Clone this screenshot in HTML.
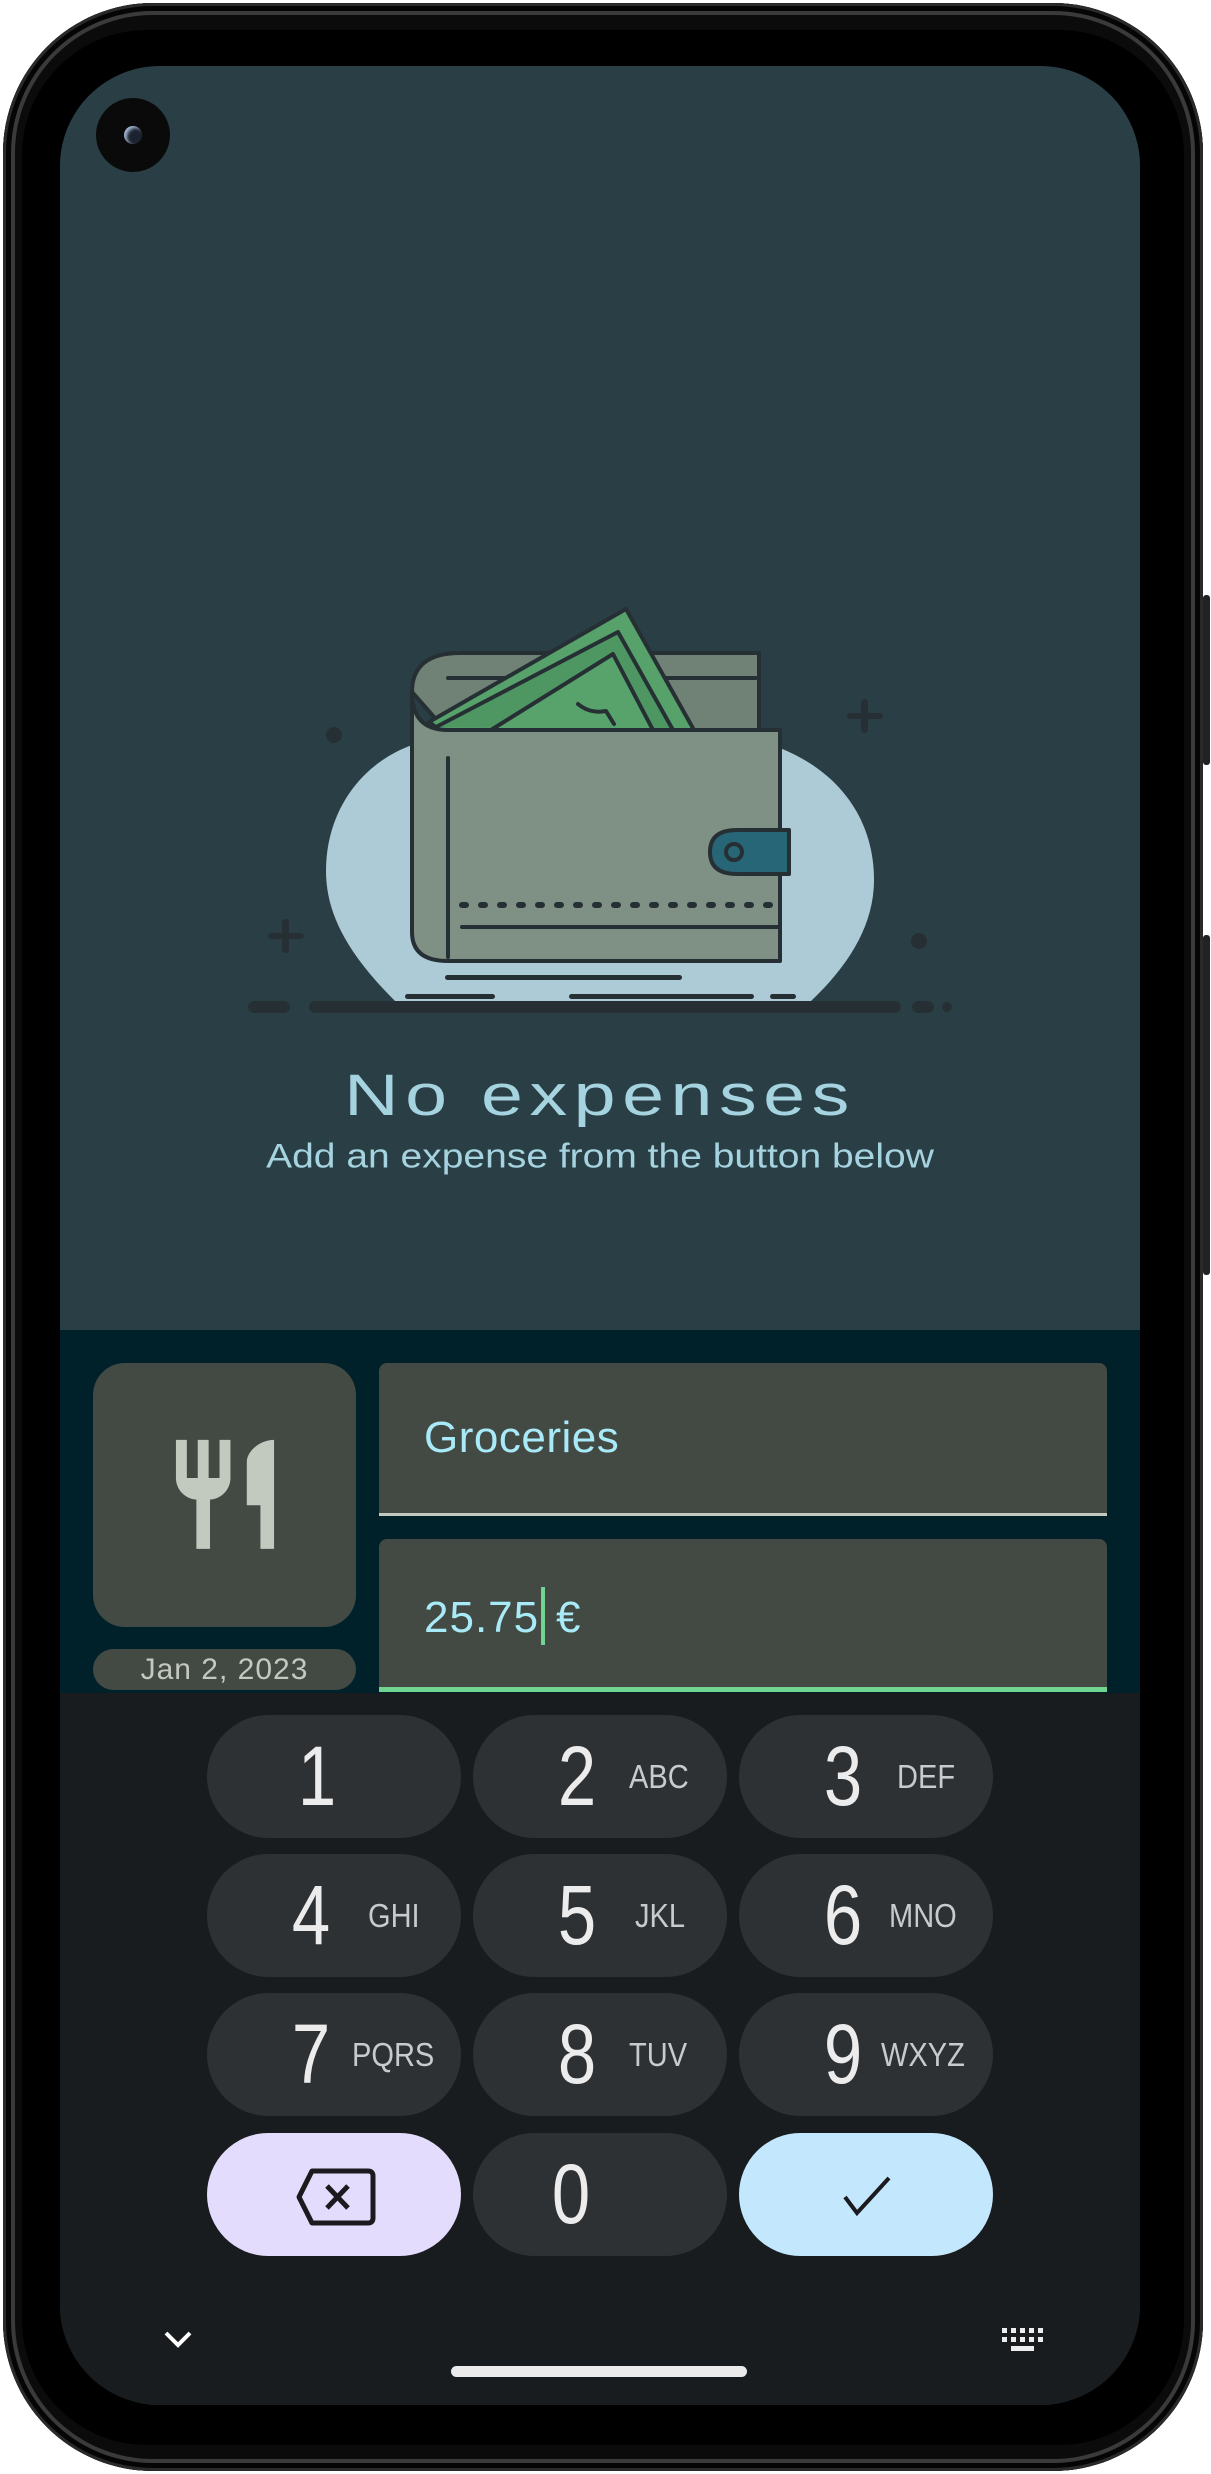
<!DOCTYPE html>
<html><head><meta charset="utf-8"><style>
*{margin:0;padding:0;box-sizing:border-box}
html,body{width:1211px;height:2474px;background:#fff;overflow:hidden;font-family:"Liberation Sans",sans-serif}
.abs{position:absolute}
.body{left:3px;top:3px;width:1200px;height:2468px;border-radius:150px;background:#0b0b0b;box-shadow:inset 0 0 0 3px #2a2a2a,inset 0 0 0 8px #050505,inset 0 0 0 12px #3a3a3a}
.bezel{left:22px;top:30px;width:1162px;height:2415px;border-radius:125px;background:#000}
.screen{left:60px;top:66px;width:1080px;height:2339px;border-radius:100px;overflow:hidden;background:#2a3f45}
.btn{background:#222;border-radius:3px;width:7px;left:1203px}
.key{position:absolute;width:254px;height:123px;border-radius:62px;background:#2d3134;color:#ececec}
.d{position:absolute;left:64px;width:80px;text-align:center;top:19px;font-size:84px;line-height:84px;transform:scaleX(0.82)}
.l{position:absolute;top:45px;font-size:33px;line-height:33px;color:#c8cacb;transform:scaleX(0.88);transform-origin:left center}
</style></head><body>
<div class="abs body"></div>
<div class="abs btn" style="top:595px;height:170px"></div>
<div class="abs btn" style="top:935px;height:340px"></div>
<div class="abs bezel"></div>
<div class="abs screen">
  <div class="abs" style="left:0;top:1264px;width:1080px;height:364px;background:#00202a"></div>
  <div class="abs" style="left:0;top:1627px;width:1080px;height:712px;background:#191c1e"></div>
</div>
<div class="abs" style="left:96px;top:98px;width:74px;height:74px;border-radius:50%;background:#0a0a0a"></div>
<div class="abs" style="left:124px;top:126px;width:18px;height:18px;border-radius:50%;background:#1c2330;box-shadow:inset 3px 2px 3px #9fb3d0"></div>

<svg class="abs" style="left:0;top:0" width="1211" height="2474" viewBox="0 0 1211 2474">
  <path d="M395 1001 C350 956 326 916 326 871 C326 812 360 764 412 745 L780 748 C840 772 874 820 874 880 C874 924 850 964 811 1001 Z" fill="#adcad7"/>
  <g stroke="#263034" stroke-width="4" stroke-linejoin="round" stroke-linecap="round">
    <path d="M412 692 Q412 653 460 653 H759 V733 H448 Z" fill="#6f8275"/>
    <line x1="448" y1="678" x2="756" y2="678"/>
    <path d="M429 722 L626 609 L694 730 H440 Z" fill="#57a16b"/>
    <path d="M436 727 L618 632 L673 730" fill="#4e9762"/>
    <path d="M491 730 L613 654 L653 730 Z" fill="#58a26c"/>
    <path d="M578 704 Q590 714 606 711 L614 724" fill="none"/>
    <path d="M448 730 H780 V961 H448 Q412 961 412 932 V692 Q412 730 448 730 Z" fill="#7f9084"/>
    <line x1="448" y1="758" x2="448" y2="957"/>
    <line x1="462" y1="905" x2="775" y2="905" stroke-width="6" stroke-dasharray="4 15"/>
    <line x1="462" y1="927" x2="778" y2="927"/>
    <path d="M789 830 H737 Q710 830 710 852 Q710 874 737 874 H789 Z" fill="#276677"/>
    <circle cx="734" cy="852" r="8" fill="#276677"/>
  </g>
  <g fill="#263034">
    <rect x="445" y="975" width="237" height="5" rx="2.5"/>
    <rect x="405" y="994" width="90" height="5" rx="2.5"/>
    <rect x="569" y="994" width="185" height="5" rx="2.5"/>
    <rect x="770" y="994" width="26" height="5" rx="2.5"/>
    <rect x="309" y="1001" width="592" height="12" rx="6"/>
    <rect x="248" y="1001" width="42" height="12" rx="6"/>
    <rect x="912" y="1001" width="22" height="12" rx="6"/>
    <circle cx="947" cy="1007" r="5"/>
    <circle cx="334" cy="735" r="8"/>
    <circle cx="919" cy="941" r="8"/>
    <rect x="268" y="933" width="36" height="6" rx="3"/>
    <rect x="282" y="919" width="7" height="34" rx="3"/>
    <rect x="847" y="713" width="36" height="6" rx="3"/>
    <rect x="861" y="699" width="7" height="34" rx="3"/>
  </g>
  <path d="M166 2333 L178 2345 L190 2333" fill="none" stroke="#fff" stroke-width="4"/>
  <g fill="#eee">
    <rect x="1002" y="2328" width="5" height="5"/><rect x="1011" y="2328" width="5" height="5"/><rect x="1020" y="2328" width="5" height="5"/><rect x="1029" y="2328" width="5" height="5"/><rect x="1038" y="2328" width="5" height="5"/>
    <rect x="1002" y="2337" width="5" height="5"/><rect x="1011" y="2337" width="5" height="5"/><rect x="1020" y="2337" width="5" height="5"/><rect x="1029" y="2337" width="5" height="5"/><rect x="1038" y="2337" width="5" height="5"/>
    <rect x="1011" y="2346" width="23" height="5"/>
  </g>
  <rect x="451" y="2366" width="296" height="11" rx="5.5" fill="#ebebeb"/>
</svg>

<div class="abs" style="left:0;top:1066px;width:1200px;text-align:center;font-size:58px;letter-spacing:5px;color:#a5d3e0;line-height:60px;transform:scaleX(1.3)">No expenses</div>
<div class="abs" style="left:0;top:1135px;width:1200px;text-align:center;font-size:39px;color:#a5d3e0;line-height:44px;transform:scaleY(0.88)">Add an expense from the button below</div>

<div class="abs" style="left:93px;top:1363px;width:263px;height:264px;border-radius:32px;background:#434a44"></div>
<div class="abs" style="left:93px;top:1649px;width:263px;height:41px;border-radius:21px;background:#434a44;color:#c4c9bf;font-size:30px;text-align:center;line-height:41px;letter-spacing:1px">Jan 2, 2023</div>
<div class="abs" style="left:379px;top:1363px;width:728px;height:153px;border-radius:8px 8px 0 0;background:#434a44;border-bottom:3px solid #c4c9bf"></div>
<div class="abs" style="left:424px;top:1414px;font-size:44px;color:#a8eaf7;line-height:48px;letter-spacing:0.5px">Groceries</div>
<div class="abs" style="left:379px;top:1539px;width:728px;height:153px;border-radius:8px 8px 0 0;background:#434a44;border-bottom:5px solid #6fd591"></div>
<div class="abs" style="left:424px;top:1594px;font-size:44px;color:#a8eaf7;line-height:48px;letter-spacing:1px">25.75</div>
<div class="abs" style="left:541px;top:1587px;width:4px;height:58px;background:#6fd591"></div>
<div class="abs" style="left:556px;top:1594px;font-size:44px;color:#a8eaf7;line-height:48px">€</div>

<svg class="abs" style="left:0;top:0" width="1211" height="2474" viewBox="0 0 1211 2474">
  <path transform="translate(159.6 1429) scale(5.45)" fill="#c2c9bf" d="M11 9H9V2H7v7H5V2H3v7c0 2.12 1.66 3.84 3.75 3.97V22h2.5v-9.03C11.34 12.84 13 11.12 13 9V2h-2v7zm5-3v8h2.5v8H21V2c-2.76 0-5 2.24-5 4z"/>
</svg>

<div class="key" style="left:207px;top:1715px"><span class="d" style="left:70px">1</span></div>
<div class="key" style="left:473px;top:1715px"><span class="d">2</span><span class="l" style="left:156px">ABC</span></div>
<div class="key" style="left:739px;top:1715px"><span class="d">3</span><span class="l" style="left:158px">DEF</span></div>
<div class="key" style="left:207px;top:1854px"><span class="d">4</span><span class="l" style="left:161px">GHI</span></div>
<div class="key" style="left:473px;top:1854px"><span class="d">5</span><span class="l" style="left:162px">JKL</span></div>
<div class="key" style="left:739px;top:1854px"><span class="d">6</span><span class="l" style="left:150px">MNO</span></div>
<div class="key" style="left:207px;top:1993px"><span class="d">7</span><span class="l" style="left:145px">PQRS</span></div>
<div class="key" style="left:473px;top:1993px"><span class="d">8</span><span class="l" style="left:156px">TUV</span></div>
<div class="key" style="left:739px;top:1993px"><span class="d">9</span><span class="l" style="left:142px">WXYZ</span></div>
<div class="key" style="left:207px;top:2133px;background:#e4dcfd"></div>
<div class="key" style="left:473px;top:2133px"><span class="d" style="left:58px">0</span></div>
<div class="key" style="left:739px;top:2133px;background:#c3e7fd"></div>
<svg class="abs" style="left:0;top:0" width="1211" height="2474" viewBox="0 0 1211 2474">
  <path d="M312 2171 H368 Q373 2171 373 2176 V2218 Q373 2223 368 2223 H312 L299 2197 Z" fill="none" stroke="#1b1b1f" stroke-width="5" stroke-linejoin="round"/>
  <path d="M327 2186 L348 2208 M348 2186 L327 2208" stroke="#1b1b1f" stroke-width="5"/>
  <path d="M845 2197 L857 2213 L889 2178" fill="none" stroke="#1b1b1f" stroke-width="4"/>
</svg>
</body></html>
